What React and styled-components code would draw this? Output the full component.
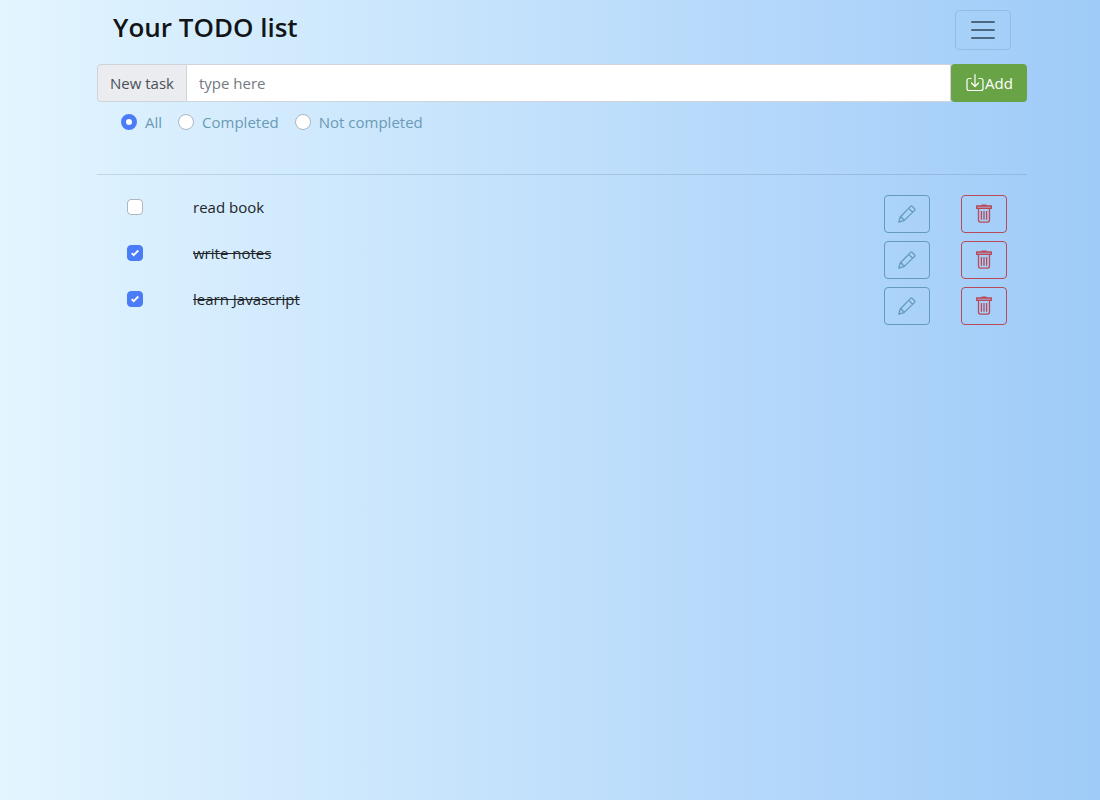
import React, { useState } from 'react';
import styled, { createGlobalStyle } from 'styled-components';

const GlobalStyle = createGlobalStyle`
  *, *::before, *::after { box-sizing: border-box; }
  body {
    margin: 0;
    min-height: 100vh;
    background: linear-gradient(to right, #e3f5ff, #9fcbf8);
    color: #212529;
    font: 15px/24px "Open Sans", "Noto Sans", sans-serif;
  }
  button, input { font: inherit; }
`;

const Page = styled.main`
  padding: 8px 73px 24px 97px;
`;

const Header = styled.header`
  display: flex;
  justify-content: space-between;
  align-items: flex-start;
  padding: 0 16px;
  height: 56px;
`;

const Title = styled.h1`
  margin: 0;
  color: #111517;
  font-size: 26px;
  font-weight: 600;
  line-height: 38px;
`;

const MenuButton = styled.button`
  display: grid;
  place-items: center;
  width: 56px;
  height: 40px;
  margin-top: 2px;
  padding: 0;
  border: 1px solid #93bbe3;
  border-radius: 4px;
  background: transparent;
  color: #4c6780;
`;

const TaskForm = styled.form`
  display: flex;
  height: 38px;
`;

const FieldLabel = styled.label`
  padding: 6px 12px;
  border: 1px solid #ced4da;
  border-radius: 4px 0 0 4px;
  background: #ebecef;
  color: #495057;
`;

const TaskInput = styled.input`
  flex: 1;
  min-width: 0;
  padding: 6px 12px;
  border: 1px solid #ced4da;
  border-left: 0;
  border-radius: 0;
  background: #fff;
  color: #495057;
  &::placeholder { color: #73797f; opacity: 1; }
`;

const AddButton = styled.button`
  display: flex;
  align-items: center;
  justify-content: center;
  width: 76px;
  padding: 0;
  border: 0;
  border-radius: 4px;
  background: #68a346;
  color: #fff;
`;

const Filters = styled.div`
  display: flex;
  gap: 16px;
  height: 72px;
  padding: 8px 24px;
  color: #6a9ab5;
`;

const Choice = styled.label`
  display: flex;
  align-items: center;
  gap: 8px;
  height: 24px;
`;

const Radio = styled.input`
  appearance: none;
  width: 16px;
  height: 16px;
  margin: 0;
  border: 1px solid #adb5bd;
  border-radius: 50%;
  background: #fff;
  &:checked { border: 5px solid #4a7cf8; }
`;

const TaskList = styled.ul`
  display: flex;
  flex-direction: column;
  gap: 8px;
  margin: 0;
  padding: 20px 20px 0 30px;
  border-top: 1px solid rgba(33, 60, 90, 0.15);
  list-style: none;
`;

const Task = styled.li`
  display: flex;
  height: 38px;
`;

const TaskLabel = styled.label`
  display: flex;
  align-items: center;
  gap: 50px;
  flex: 1;
  height: 24px;
  text-decoration: ${({ $done }) => ($done ? 'line-through' : 'none')};
`;

const CheckBox = styled.span`
  display: grid;
  width: 16px;
  height: 16px;
  > * { grid-area: 1 / 1; }
  input {
    appearance: none;
    width: 16px;
    height: 16px;
    margin: 0;
    border: 1px solid #adb5bd;
    border-radius: 4px;
    background: #fff;
  }
  input:checked { border-color: #4a7cf8; background: #4a7cf8; }
  svg { place-self: center; pointer-events: none; }
`;

const Actions = styled.div`
  display: flex;
  gap: 31px;
`;

const ActionButton = styled.button`
  display: grid;
  place-items: center;
  width: 46px;
  height: 38px;
  padding: 0;
  border: 1px solid currentColor;
  border-radius: 4px;
  background: transparent;
  color: ${({ $danger }) => ($danger ? '#b94a58' : '#639bbd')};
`;

const MenuIcon = () => (
  <svg width="30" height="30" viewBox="0 0 30 30" fill="none" stroke="currentColor" strokeWidth="2" strokeLinecap="round" aria-hidden="true">
    <path d="M4 7h22M4 15h22M4 23h22" />
  </svg>
);

const SaveIcon = () => (
  <svg width="20" height="20" viewBox="0 0 20 20" fill="none" stroke="currentColor" strokeLinecap="round" strokeLinejoin="round" aria-hidden="true">
    <path d="M6 5.5H4a2 2 0 0 0-2 2v8a2 2 0 0 0 2 2h12a2 2 0 0 0 2-2v-8a2 2 0 0 0-2-2h-2M10 1.5v12M6.5 10l3.5 3.5 3.5-3.5" strokeWidth="1.2" />
  </svg>
);

const PencilIcon = () => (
  <svg width="20" height="20" viewBox="0 0 20 20" fill="none" stroke="currentColor" strokeWidth="1.3" strokeLinejoin="round" aria-hidden="true">
    <path d="M13.6 2.4q.8-.8 1.6 0l2.4 2.4q.8.8 0 1.6L7 16.6l-5.2 1.6L3.2 13zM11.8 4.4l3.8 3.8M3.4 13q2 .2 1.8 1.8 1.8-.2 1.8 1.8" />
  </svg>
);

const TrashIcon = () => (
  <svg width="20" height="20" viewBox="0 0 20 20" fill="none" stroke="currentColor" strokeWidth="1.3" strokeLinejoin="round" aria-hidden="true">
    <path d="M2.6 2h14.8v2.4H2.6zM7.5 1.2h5M4.5 4.5v11.6q0 2 2 2h7q2 0 2-2V4.5M7.4 7v8.8M10 7v8.8M12.6 7v8.8" />
    <path d="M2.6 2h14.8v2.4H2.6z" fill="currentColor" fillOpacity="0.3" stroke="none" />
  </svg>
);

const CheckIcon = () => (
  <svg width="8" height="8" viewBox="0 0 8 8" fill="none" stroke="#fff" strokeWidth="1.8" aria-hidden="true">
    <path d="M.7 4.2l2 2L7.3 1.5" />
  </svg>
);

const FILTERS = ['All', 'Completed', 'Not completed'];

const INITIAL_TASKS = [
  { id: 1, text: 'read book', done: false },
  { id: 2, text: 'write notes', done: true },
  { id: 3, text: 'learn Javascript', done: true },
];

export default function App() {
  const [tasks, setTasks] = useState(INITIAL_TASKS);
  const [filter, setFilter] = useState('All');
  const [draft, setDraft] = useState('');

  const addTask = (event) => {
    event.preventDefault();
    if (!draft.trim()) return;
    setTasks([...tasks, { id: Date.now(), text: draft.trim(), done: false }]);
    setDraft('');
  };
  const toggle = (id) => setTasks(tasks.map((t) => (t.id === id ? { ...t, done: !t.done } : t)));
  const remove = (id) => setTasks(tasks.filter((t) => t.id !== id));
  const visible = tasks.filter((t) => filter === 'All' || t.done === (filter === 'Completed'));

  return (
    <>
      <GlobalStyle />
      <Page>
        <Header>
          <Title>Your TODO list</Title>
          <MenuButton type="button" aria-label="Menu"><MenuIcon /></MenuButton>
        </Header>
        <TaskForm onSubmit={addTask}>
          <FieldLabel htmlFor="new-task">New task</FieldLabel>
          <TaskInput id="new-task" placeholder="type here" value={draft} onChange={(e) => setDraft(e.target.value)} />
          <AddButton type="submit"><SaveIcon />Add</AddButton>
        </TaskForm>
        <Filters role="radiogroup" aria-label="Show tasks">
          {FILTERS.map((name) => (
            <Choice key={name}>
              <Radio type="radio" name="filter" checked={filter === name} onChange={() => setFilter(name)} />
              {name}
            </Choice>
          ))}
        </Filters>
        <TaskList>
          {visible.map((task) => (
            <Task key={task.id}>
              <TaskLabel $done={task.done}>
                <CheckBox>
                  <input type="checkbox" checked={task.done} onChange={() => toggle(task.id)} />
                  {task.done && <CheckIcon />}
                </CheckBox>
                <span>{task.text}</span>
              </TaskLabel>
              <Actions>
                <ActionButton type="button" aria-label="Edit"><PencilIcon /></ActionButton>
                <ActionButton type="button" $danger aria-label="Delete" onClick={() => remove(task.id)}><TrashIcon /></ActionButton>
              </Actions>
            </Task>
          ))}
        </TaskList>
      </Page>
    </>
  );
}
